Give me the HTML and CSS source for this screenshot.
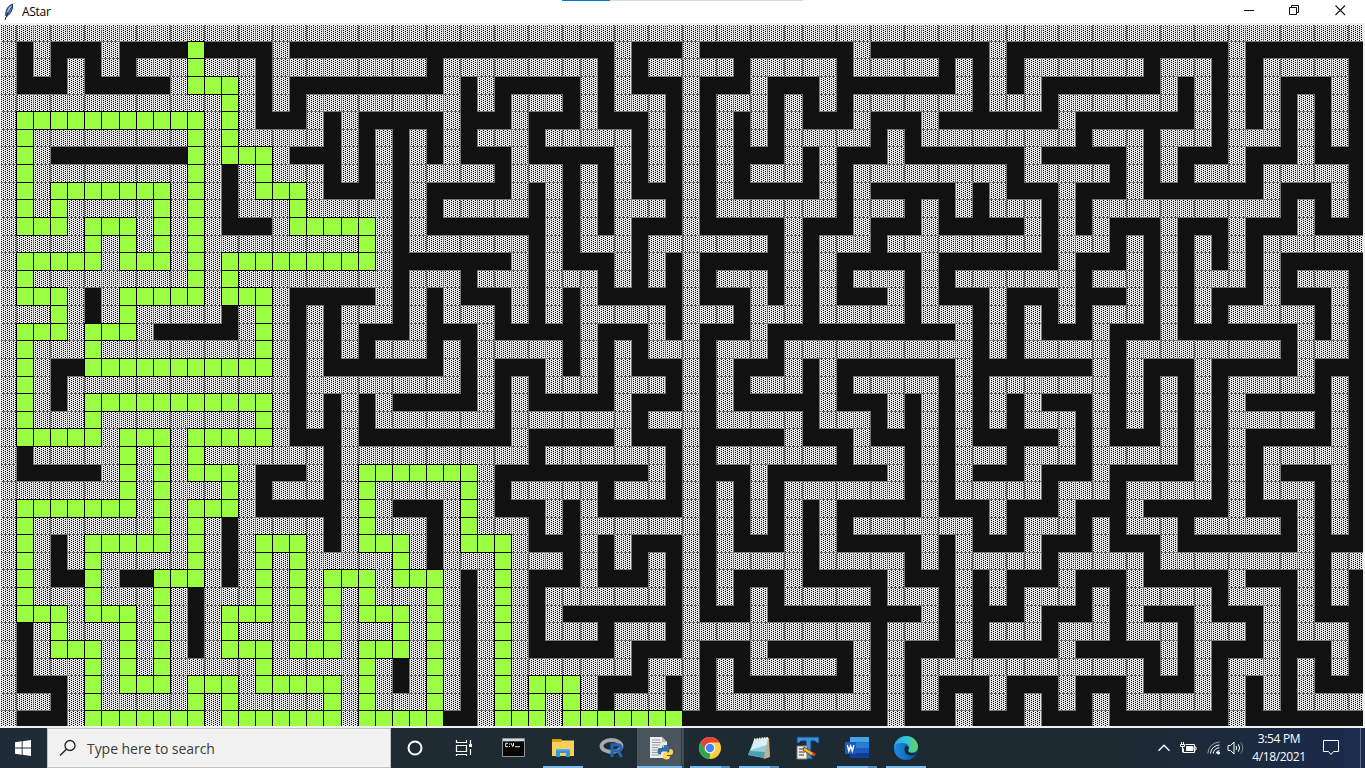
FILE: index.html
```html
<!DOCTYPE html>
<html lang="en">
<head>
<meta charset="utf-8">
<title>AStar</title>
<link rel="stylesheet" href="styles.css">
</head>
<body>
<div class="desktop">
  <header class="titlebar">
    <div class="progress"><span class="progress-done"></span></div>
    <svg class="feather" width="12" height="18" viewBox="0 0 12 18"><path d="M9.6 1.2C5.5 2.4 2.6 6.5 2.7 12.5L4.3 13C7.6 10.6 9.9 6.4 9.6 1.2z" fill="#5b93d6" stroke="#14213a" stroke-width="1"/><path d="M8.2 4 3.9 12 2 17" fill="none" stroke="#0d1526" stroke-width="1"/><path d="M7.7 3.4 4.6 9" stroke="#b9d8f7" stroke-width="1.1"/></svg>
    <span class="title">AStar</span>
    <div class="controls">
      <svg width="11" height="11" viewBox="0 0 11 11"><path d="M1 5.5H11" stroke="#111" fill="none"/></svg>
      <svg width="11" height="11" viewBox="0 0 11 11"><path d="M.5 2.5h7v7h-7zM2.5 2.5v-2h7v7h-2" stroke="#111" fill="none"/></svg>
      <svg width="11" height="11" viewBox="0 0 11 11"><path d="M.5.5 10 10M10 .5.5 10" stroke="#111" stroke-width="1.1" fill="none"/></svg>
    </div>
  </header>
  <main class="board">
    <svg id="maze" width="1362" height="701" viewBox="1 25 1362 701" shape-rendering="crispEdges">
      <defs>
        <pattern id="stipple" width="4" height="2" patternUnits="userSpaceOnUse">
          <rect width="4" height="2" fill="#e6e6e6"/>
          <rect x="3" width="1" height="1" fill="#000"/>
          <rect x="1" y="1" width="1" height="1" fill="#000"/>
        </pattern>
      </defs>
    </svg>
  </main>
  <footer class="taskbar">
    <div class="start"><svg width="16" height="16" viewBox="0 0 16 16" fill="#fff"><path d="M0 2.2 6.7 1.300V7.500H0zM7.600 1.200 16 0V7.500H7.600zM0 8.400H6.700V14.700L0 13.800zM7.600 8.400H16V16L7.600 14.800z"/></svg></div>
    <div class="search">
      <svg width="18" height="18" viewBox="0 0 18 18"><circle cx="11" cy="6.500" r="5" fill="none" stroke="#222" stroke-width="1.300"/><path d="M7.400 10.200 1 16.600" stroke="#222" stroke-width="1.400"/></svg>
      <span class="hint">Type here to search</span>
    </div>
    <div class="slot narrow"><svg width="18" height="18" viewBox="0 0 18 18"><circle cx="9" cy="9" r="6.500" fill="none" stroke="#fff" stroke-width="2"/></svg></div>
    <div class="slot narrow"><svg width="18" height="18" viewBox="0 0 18 18" fill="none" stroke="#fff"><path d="M1.500 1v2.500h10V1M1.500 6.500h10v6h-10zM1.500 17v-1.500h10V17M15.500 1v4M15.500 10v6" stroke-width="1.200"/><path d="M14 5h3v3h-3z" fill="#fff" stroke="none"/></svg></div>
    <div class="slot app"><svg width="24" height="20" viewBox="0 0 24 20"><path d="M.5.5h22v18H.5z" fill="#050505" stroke="#8e9498"/><path d="M1 1h21v2.300H1z" fill="#d5d9dc"/><path d="M6 5.300H3.700v3.400H6M7.500 5.500v1M7.500 8v1M9 5l2 4M11.500 5v3M13 8.700h5" stroke="#eee" fill="none"/></svg></div>
    <div class="slot app open"><svg width="22" height="19" viewBox="0 0 22 19"><path d="M0 0h9l1.500 2H21v4H0z" fill="#e09b11"/><path d="M0 3h9l1-1.500h12V17H0z" fill="#fccf58"/><path d="M4 18v-8h14v8h-4v-4H8v4z" fill="#3296dc"/><path d="M4 10h14v1.500H4z" fill="#54b4ee"/></svg></div>
    <div class="slot app"><svg width="26" height="20" viewBox="0 0 26 20"><ellipse cx="12.500" cy="8" rx="10" ry="6" fill="none" stroke="#a5a8ad" stroke-width="3.800"/><path d="M13 19V6.700h5.500q3.600 0 3.600 3.100 0 2.600-3 3.200L22.500 19M13 13h6" fill="none" stroke="#2266b8" stroke-width="3"/></svg></div>
    <div class="slot app open active"><svg width="24" height="24" viewBox="0 0 24 24"><path d="M1 1h12l5 5v16H1z" fill="#ececec"/><path d="M13 1v5h5" fill="#bbb"/><path d="M3 4h8M3 6.500h9M3 9h8M3 11.500h6M3 14h5M3 16.500h6M3 19h7" stroke="#888" stroke-width=".8"/><path d="M13 14v-3q0-2 3.500-2t3.500 2v3q0 1.500-2 1.500h-4q-2 0-2 3h-1q-2.500 0-2.500-3.500T11 12h5" fill="#336f9f"/><path d="M20.500 13h1q2.500 0 2.500 3t-2.500 3H18v1h3q0 3.500-3.500 3.500T14 21v-2.500q0-2 2-2h3q1.500 0 1.500-2z" fill="#ffd642"/><circle cx="14.500" cy="10.500" r=".7" fill="#fff"/><circle cx="19" cy="21.800" r=".7" fill="#fff"/></svg></div>
    <div class="slot app open many"><svg width="22" height="22" viewBox="0 0 22 22"><circle cx="11" cy="11" r="11" fill="#ffce43"/><path d="M1.500 5.500A11 11 0 0 1 20.500 5.500H11L6.300 13.800z" fill="#e54336"/><path d="M1.500 5.500 6.300 13.800 11 16.500 10.500 22A11 11 0 0 1 1.500 5.500z" fill="#2ea350"/><circle cx="11" cy="11" r="5.300" fill="#fff"/><circle cx="11" cy="11" r="4.200" fill="#4285f4"/></svg></div>
    <div class="slot app open many"><svg width="24" height="23" viewBox="0 0 24 23"><path d="M8 2 22 1 23 20 17 22z" fill="#c8b08a"/><path d="M7 3 21 1 17 21 1 18z" fill="#8fd0dc"/><path d="M7 3 21 1 19.500 8 4 13z" fill="#d6f0f3"/><path d="M3 14 18 15 17 21 1 18z" fill="#4b9fb0"/><path d="M7 2.500 21 .7" stroke="#eee" stroke-dasharray="1.500 1" stroke-width="2"/></svg></div>
    <div class="slot app"><svg width="24" height="24" viewBox="0 0 24 24"><path d="M1 1h22v6h-2L19 5h-4v15l2 3H8l2-3V5H5L3 7H1z" fill="#3b94d7" stroke="#123d77"/><path d="M1 10h10v13H1z" fill="#f3f0e8" stroke="#777"/><path d="M3 13h5M3 16h6M3 19h5" stroke="#333"/><path d="M8 11 18 17 16 20 7 14z" fill="#f4b51d" stroke="#40230b" stroke-width=".7"/><path d="M17 16l3 2-2 2.500-2-1z" fill="#d83d36"/></svg></div>
    <div class="slot app open many"><svg width="24" height="22" viewBox="0 0 24 22"><path d="M5 0h19v5.500H5z" fill="#41a5ee"/><path d="M5 5.500h19V11H5z" fill="#2b7cd3"/><path d="M5 11h19v5H5z" fill="#185abd"/><path d="M5 16h19v5H5z" fill="#103f91"/><path d="M0 5h11v12H0z" fill="#185abd"/><path d="M2.300 8 3.900 14 5.600 9 7.300 14 8.900 8" fill="none" stroke="#fff" stroke-width="1.400"/></svg></div>
    <div class="slot app open"><svg width="24" height="24" viewBox="0 0 24 24">
      <defs>
        <linearGradient id="edgeTop" x2="1"><stop stop-color="#2aa9e8"/><stop offset=".5" stop-color="#35c1d8"/><stop offset="1" stop-color="#68d851"/></linearGradient>
        <linearGradient id="edgeLow" x2="1"><stop stop-color="#1b8fe0"/><stop offset="1" stop-color="#0c4fa0"/></linearGradient>
      </defs>
      <circle cx="12" cy="12" r="12" fill="url(#edgeLow)"/><path d="M0 11C1 5 5.500 0 12 0s12 5 12 10.500c0 4-3 6-6 6s-5-1.500-3.500-3S15 7 9 7s-8 2-9 4z" fill="url(#edgeTop)"/><path d="M12 9.500c2.500.5 3.500 2.500 2.500 4s.5 3.500 3.500 3.500 4.500-.5 5-1.500l-1.500 3c-1 .7-3 1-4.500 1-4 0-6.500-2.500-6.500-5.500 0-2 .5-3.500 1.500-4.500z" fill="#1d2931"/></svg></div>
    <div class="tray">
      <svg class="chevron" width="14" height="8" viewBox="0 0 14 8"><path d="M1.500 6.700 7 1.200l5.500 5.500" fill="none" stroke="#fff" stroke-width="1.300"/></svg>
      <svg class="battery" width="17" height="13" viewBox="0 0 17 13" fill="none" stroke="#fff"><path d="M5.500 2.500h9v8h-11v-4M14.500 5h1.500v3h-1.500"/><path d="M6.500 4.500h6.500v4h-6.500z" fill="#fff"/><path d="M1.500 0v2M3.500 0v2M.5 2.500h4v2h-4zM2.500 5v5.500"/></svg>
      <svg class="wifi" width="14" height="14" viewBox="0 0 14 14" fill="none" stroke="#fff"><path d="M.8 12.500A12 12 0 0 1 12.500 1" stroke="#9aa3ab"/><path d="M3.500 12.500A9 9 0 0 1 12.500 4M6.200 12.500A6.300 6.300 0 0 1 12.500 6.800M9 12.500A3.500 3.500 0 0 1 12.500 9.700"/><circle cx="11.500" cy="12" r="1.100" fill="#fff"/></svg>
      <svg class="volume" width="18" height="14" viewBox="0 0 18 14" fill="none" stroke="#fff"><path d="M1 4.500h2.500L7 1v12L3.500 9.500H1z"/><path d="M9 5q1.500 2 0 4M11.300 3.300q2.700 3.700 0 7.400"/><path d="M13.800 1.500q4 5.500 0 11" stroke="#7d8790"/></svg>
      <div class="clock"><span>3:54 PM</span><span>4/18/2021</span></div>
      <svg class="notice" width="17" height="16" viewBox="0 0 17 16"><path d="M.5.500h15v11h-5L8 14.500 5.500 11.500h-5z" fill="none" stroke="#fff"/></svg>
    </div>
  </footer>
</div>
<script src="maze.js"></script>
</body>
</html>
```
FILE: styles.css
```css
body { margin: 0; font-family: "Open Sans", "Noto Sans", sans-serif; }
.desktop { display: flex; flex-direction: column; width: 1365px; height: 768px; overflow: hidden; }
.titlebar { position: relative; display: flex; align-items: center; height: 23px; background: #fff; flex: none; }
.progress { position: absolute; left: 562px; top: 0; width: 241px; height: 1px; background: #dcdcdc; }
.progress-done { display: block; width: 48px; height: 1px; background: #0078d4; }
.feather { margin-left: 3px; }
.title { margin-left: 7px; font-size: 12px; letter-spacing: -0.3px; color: #000; line-height: 20px; }
.controls { display: flex; gap: 35px; margin-left: auto; margin-right: 19px; margin-bottom: 3px; }
.board { height: 703px; padding: 2px 2px 0 1px; background: #f0f0f0; box-sizing: content-box; flex: none; }
.board svg { display: block; background: #111; }
.taskbar { display: flex; height: 40px; background: linear-gradient(90deg, #202c35 0, #1d2931 1120px, #1c2a3e 1240px, #1c2b4e 1365px); flex: none; }
.start { box-sizing: border-box; width: 47px; padding-right: 2px; display: flex; align-items: center; justify-content: center; }
.search { box-sizing: border-box; width: 344px; display: flex; align-items: center; padding-left: 11px; gap: 10px; background: #f2f2f2; border: 1px solid #c2c2c2; }
.hint { font-size: 14px; letter-spacing: -0.05px; color: #3b3b3b; }
.slot { position: relative; box-sizing: border-box; width: 49px; display: flex; align-items: center; justify-content: center; }
.narrow { width: 48.5px; }
.app { padding-left: 2px; }
.open::after { content: ""; position: absolute; left: 6px; bottom: 0; width: 40px; height: 2px; background: #76b9ed; }
.many::after { background: linear-gradient(90deg, #76b9ed 31px, #5a8db5 31px); }
.active { background: linear-gradient(90deg, transparent 2px, #4b555d 2px, #4b555d 46px, #29343d 46px, #414b53 47px); }
.active::after { left: 2px; width: 45px; }
.tray { display: flex; align-items: center; flex: 1; padding-left: 228px; margin-right: 4px; border-right: 1px solid #66708a; }
.battery { margin-left: 9px; }
.wifi { margin-left: 10px; }
.volume { margin-left: 6px; }
.clock { display: flex; flex-direction: column; align-items: center; width: 60px; margin-left: 4px; font-size: 12px; line-height: 18px; letter-spacing: -0.35px; color: #fff; white-space: nowrap; }
.notice { margin-left: 14px; }
```
FILE: maze.js
```js
// Each row: wall columns | path columns, written as single columns or ranges.
const rows = [
  "0-79|",
  "0 2 6 16 36 40 50 58 72|11",
  "0 2 4 6 8-10 12-14 16-24 26-34 36 38-42 44-48 50-54 56 58 60-66 68-70 72 74-78|11",
  "0 4 10 14 16 26 28 34 36 40 44 48 56 58 60 68 70 72 74 78|11-13",
  "0-12 14 16 18-26 28 30-32 34 36-38 40 42-44 46 48 50-56 58-60 62-68 70 72 74 76 78|13",
  "0 12 14 18 20 26 30 34 38 40 42 44 46 50 54 62 70 72 74 76 78|1-11 13",
  "0 2-10 12 14-18 20 22 24 26 28-30 32-36 38 40 42 44 46-50 52 54-62 64-66 68-70 72-74 76 78|1 11 13",
  "0 2 12 16 20 22 24 26 30 36 38 40 42 46 48 52 60 66 68 72 76|1 11 13-15",
  "0 2-10 12 14 16-18 20 22 24-28 30-32 34 36 38 40 42 44-46 48 50-58 60-64 66 68 70-72 74-78|1 11 15",
  "0 2 10 12 14 18 22 24 30 32 34 36 40 42 48 50 56 58 62 66 74 78|1 3-9 11 15-17",
  "0 2 4-8 10 12 14-16 18-22 24 26-30 32 34 36-38 40 42-48 50-52 54 56 58-60 62 64-74 76 78|1 3 9 11 17",
  "0 4 8 10 12 16 22 24 32 34 36 40 46 50 54 60 62 64 68 72 76|1-3 5-7 9 11 17-21",
  "0-4 6 8 10 12-20 22 24-30 32 34-36 38-44 46 48-50 52-60 62-64 66 68 70 72 74-79|5 7 9 11 21",
  "0 6 10 12 22 30 32 36 38 40 46 48 54 62 66 68 70 72 74|1-5 7-9 11 13-21",
  "0 2-10 12 14-22 24-26 28-30 32-34 36 38 40 42-44 46 48 50-52 54 56-62 64-66 68 70-72 74 76-78|1 11 13",
  "0 4 6 12 16 22 24 26 30 32 34 40 44 46 48 52 54 58 62 66 68 70 74 78|1-3 7-11 13-15",
  "0-2 4 6 8-12 14 16 18 20-22 24 26-28 30 32 34-38 40-42 44-46 48-52 54-56 58 60 62 64-66 68 70 72-76 78|3 7 15",
  "0 4 8 14 16 18 20 24 28 34 38 40 44 56 58 60 64 68 76 78|1-3 5-7 15",
  "0 2-4 6-14 16 18 20 22-24 26 28-32 34 36 38-40 42-44 46-56 58 60-64 66-74 76-78|1 5 15",
  "0 2 16 18 26 28 32 34 36 40 42 46 48 56 64 66 70 76|1 5-15",
  "0 2 4-16 18-26 28 30 32-34 36-38 40 42 44-46 48 50-54 56 58-64 66 68 70 72-76 78|1",
  "0 2 4 16 18 20 22 28 30 36 40 42 48 52 54 56 58 60 64 66 68 70 72 78|1 5-15",
  "0 2-4 6-14 16 18 20 22-28 30-36 38-40 42-46 48-50 52 54 56 58 60-62 64 66 68 70 72-76 78|1 5 15",
  "0 6 10 16 20 30 36 40 46 50 54 56 62 64 68 70 72 78|1-5 7-9 11-15",
  "0 2-6 8 10 12-18 20-30 32-38 40 42-48 50-52 54 56-58 60-62 64-68 70 72 74-78|7 9 11",
  "0 6 8 10 14 18 20 28 38 40 44 52 54 56 60 64 70 72 74 78|7 9 11-13 21-27",
  "0-6 8 10-12 14 16-18 20 22-26 28 30-34 36-38 40 42 44 46-52 54 56-60 62-64 66-70 72 74-76 78|7 9 13 21 27",
  "0 8 10 14 20 22 26 28 32 34 40 42 44 46 48 54 58 62 66 72 76 78|1-7 9 11-13 21 27",
  "0 2-8 10 12 14-18 20 22-24 26 28-30 32 34-40 42 44 46 48 50-56 58 60-62 64 66-68 70-74 76 78|1 9 11 21 27",
  "0 2 4 10 12 14 18 20 24 26 30 34 36 40 42 46 48 54 56 60 64 68 76|1 5-9 11 15-17 21-23 27-29",
  "0 2 4 6-10 12 14 16 18-22 24 26-28 30-32 34 36 38 40 42-46 48-52 54 56-60 62-66 68-76 78-79|1 5 11 15 17 23 29",
  "0 2 6 12 14 16 18 22 26 28 30 34 38 40 42 46 52 56 58 62 66 72 76 78|1 5 9-11 15 17 19-21 23-25 29",
  "0 2-4 6-8 10 12-14 16 18 20 22-24 26 28 30 32-38 40 42 44 46-50 52-54 56 58 60-62 64 66-70 72-74 76 78|1 5 9 15 17 19 21 25 29",
  "0 4 8 10 12 16 18 20 24 26 28 30 32 40 44 54 56 60 64 66 70 74 76|1-3 5-7 9 13-15 17 19 21-23 25 29",
  "0 2 4-6 8 10 12 14-16 18 20-22 24 26 28 30 32-34 36-38 40-50 52-54 56 58-60 62-64 66-68 70-72 74 76-78|3 7 9 13 17 19 23 25 29",
  "0 2 6 8 10 12 16 20 24 26 28 30 36 40 44 50 52 56 62 68 70 74 78|3-5 7 9 13-15 17-19 21-23 25 29",
  "0 2-4 6 8 10-14 16-20 22 24 26 28 30-36 38-40 42 44-48 50 52 54-66 68 70 72-74 76 78|5 7 9 15 21 25 29",
  "0 4 6 10 14 20 22 24 26 28 30 34 38 40 42 50 52 54 58 62 66 70 72 74 76|5 7-9 11-13 15-19 21 25 29 31-33",
  "0-2 4 6-10 12 14-18 20 22-24 26 28 30 32 34 36-38 40 42-50 52 54 56 58 60 62 64 66-70 72 74 76-79|5 11 13 19 21 25 29 31 33",
  "0 4 12 20 28 32 52 56 60 64 72|5-11 13-19 21-25 29-31 33-39"
];
const rowEdges = [24, 41, 58, 76, 94, 111, 129, 146, 164, 182, 199, 217, 235, 252, 270, 287, 305, 323, 340, 358, 376,
  393, 411, 428, 446, 464, 481, 499, 517, 534, 552, 569, 587, 605, 622, 640, 658, 675, 693, 710, 728];
const colEdge = k => Math.floor(17.075 * k - 0.5);

function expand(list) {
  const cols = [];
  for (const part of list.split(" ").filter(Boolean)) {
    const [from, to = from] = part.split("-").map(Number);
    for (let c = from; c <= to; c++) cols.push(c);
  }
  return cols;
}

function outline(kind) {
  let d = "";
  rows.forEach((row, r) => {
    for (const c of expand(row.split("|")[kind])) {
      const x = colEdge(c), y = rowEdges[r];
      d += `M${x + 0.5} ${y + 0.5}H${colEdge(c + 1) + 0.5}V${rowEdges[r + 1] + 0.5}H${x + 0.5}z`;
    }
  });
  return d;
}

function draw(kind, fill, stroke) {
  const path = document.createElementNS("http://www.w3.org/2000/svg", "path");
  path.setAttribute("d", outline(kind));
  path.setAttribute("fill", fill);
  path.setAttribute("stroke", stroke);
  document.getElementById("maze").appendChild(path);
}

draw(0, "url(#stipple)", "#777");
draw(1, "#99ff40", "#000");
```
